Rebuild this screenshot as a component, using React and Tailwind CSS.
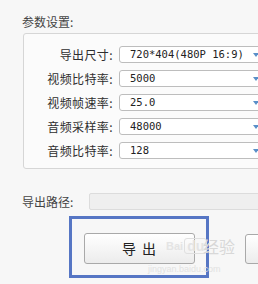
import React from 'react';

const rows = [
  { label: '导出尺寸:', value: '720*404(480P 16:9)' },
  { label: '视频比特率:', value: '5000' },
  { label: '视频帧速率:', value: '25.0' },
  { label: '音频采样率:', value: '48000' },
  { label: '音频比特率:', value: '128' },
];

const Arrow = () => (
  <svg width="6" height="4" viewBox="0 0 6 4" className="shrink-0">
    <path d="M0 0 L6 0 L3 4 Z" fill="#5a8fc8" />
  </svg>
);

const App = () => {
  return (
    <div
      className="relative w-[258px] h-[284px] overflow-hidden bg-[#f7f7f7] text-[#333]"
      style={{ fontFamily: '"Noto Sans CJK SC", "Liberation Sans", sans-serif' }}
    >
      <div className="pl-[22px] pt-[14px] text-[12px] leading-[16px] text-[#444]">参数设置:</div>

      <div className="ml-[23px] mt-[3px] w-[260px] h-[136px] border border-[#d6d6d6] rounded-[3px] bg-[#fbfbfb] pt-[12px] flex flex-col gap-[7px]">
        {rows.map((r) => (
          <div key={r.label} className="flex items-center h-[17px]">
            <div className="shrink-0 w-[89px] text-right text-[12px] leading-[17px] text-[#2e2e2e] tracking-[0.4px]">{r.label}</div>
            <div className="shrink-0 ml-[6px] w-[144px] h-[17px] flex items-center justify-between border border-[#bdbdbd] rounded-[3px] bg-white pl-[10px] pr-[3px]">
              <span
                className="text-[10.5px] leading-none text-[#222]"
                style={{ fontFamily: '"DejaVu Sans Mono", "Liberation Mono", monospace' }}
              >
                {r.value}
              </span>
              <Arrow />
            </div>
          </div>
        ))}
      </div>

      <div className="mt-[24px] pl-[22px] flex items-center">
        <div className="shrink-0 text-[12px] leading-[17px] text-[#444] w-[67px]">导出路径:</div>
        <div className="shrink-0 w-[200px] h-[17px] border border-[#dcdcdc] bg-[#efefef] rounded-[2px]" />
      </div>

      <div className="mt-[6px] flex items-start">
        <div className="shrink-0 ml-[69px] w-[140px] h-[62px] border-[3px] border-[#5676c4] flex items-center justify-center">
          <button className="mt-[2px] w-[111px] h-[31px] rounded-[3px] border border-[#a9a9a9] bg-gradient-to-b from-white to-[#ececec] text-[14px] text-[#222] tracking-[6px] pl-[6px]">
            导出
          </button>
        </div>
        <div className="shrink-0 ml-[36px] mt-[18px] w-[30px] h-[30px] rounded-[3px] border border-[#a9a9a9] bg-gradient-to-b from-white to-[#ececec]" />
      </div>

      <div
        className="absolute left-[166px] top-[238px] flex items-center gap-[1px] leading-none pointer-events-none"
        style={{ fontFamily: '"Liberation Sans", sans-serif' }}
      >
        <span className="text-[11px] font-bold text-[#e4e4e4]">Bai</span>
        <span className="px-[2px] text-[14px] font-bold text-[#e4e4e4] rounded-[3px] border border-[#e0e0e0]">du</span>
      </div>
      <div className="absolute left-[203px] top-[238px] text-[16px] text-[#d8d8d8] leading-none pointer-events-none">经验</div>
      <div
        className="absolute left-[148px] top-[265px] text-[9px] text-[#e2e2e2] leading-none pointer-events-none"
        style={{ fontFamily: '"Liberation Sans", sans-serif' }}
      >
        jingyan.baidu.com
      </div>
    </div>
  );
};

export default App;
